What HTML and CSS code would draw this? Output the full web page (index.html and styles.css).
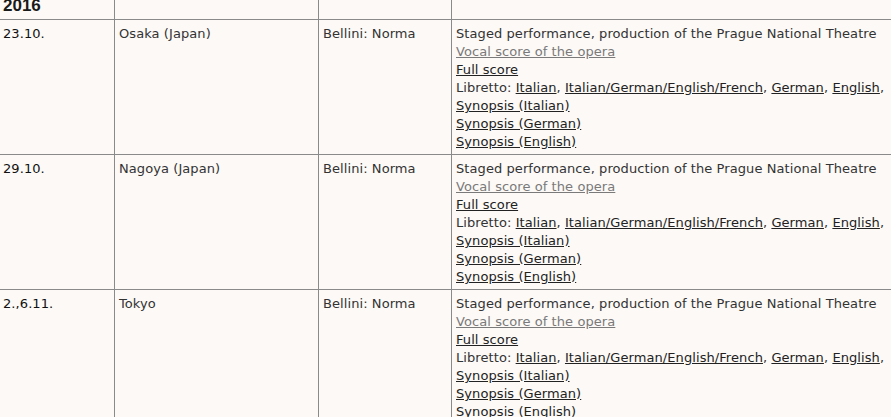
FILE: index.html
```html
<!DOCTYPE html>
<html lang="en">
<head>
<meta charset="utf-8">
<title>Performances 2016</title>
<link rel="stylesheet" href="styles.css">
</head>
<body>
<table class="schedule">
  <colgroup>
    <col class="c-date">
    <col class="c-place">
    <col class="c-work">
    <col class="c-info">
  </colgroup>
  <tr class="year-row">
    <th class="year">2016</th>
    <th></th>
    <th></th>
    <th></th>
  </tr>
  <tr>
    <td class="date">23.10.</td>
    <td>Osaka (Japan)</td>
    <td>Bellini: Norma</td>
    <td class="info">Staged performance, production of the Prague National Theatre<br>
      <a href="#" class="visited">Vocal score of the opera</a><br>
      <a href="#">Full score</a><br>
      Libretto: <a href="#">Italian</a>, <a href="#">Italian/German/English/French</a>, <a href="#">German</a>, <a href="#">English</a>,<br>
      <a href="#">Synopsis (Italian)</a><br>
      <a href="#">Synopsis (German)</a><br>
      <a href="#">Synopsis (English)</a></td>
  </tr>
  <tr>
    <td class="date">29.10.</td>
    <td>Nagoya (Japan)</td>
    <td>Bellini: Norma</td>
    <td class="info">Staged performance, production of the Prague National Theatre<br>
      <a href="#" class="visited">Vocal score of the opera</a><br>
      <a href="#">Full score</a><br>
      Libretto: <a href="#">Italian</a>, <a href="#">Italian/German/English/French</a>, <a href="#">German</a>, <a href="#">English</a>,<br>
      <a href="#">Synopsis (Italian)</a><br>
      <a href="#">Synopsis (German)</a><br>
      <a href="#">Synopsis (English)</a></td>
  </tr>
  <tr>
    <td class="date">2.,6.11.</td>
    <td>Tokyo</td>
    <td>Bellini: Norma</td>
    <td class="info">Staged performance, production of the Prague National Theatre<br>
      <a href="#" class="visited">Vocal score of the opera</a><br>
      <a href="#">Full score</a><br>
      Libretto: <a href="#">Italian</a>, <a href="#">Italian/German/English/French</a>, <a href="#">German</a>, <a href="#">English</a>,<br>
      <a href="#">Synopsis (Italian)</a><br>
      <a href="#">Synopsis (German)</a><br>
      <a href="#">Synopsis (English)</a></td>
  </tr>
</table>
</body>
</html>
```
FILE: styles.css
```css
html {
  overflow: hidden;
  background: #fcf9f6;
}
body {
  margin: 0;
  background: #fcf9f6;
  font-family: "DejaVu Sans", Verdana, sans-serif;
  font-size: 13px;
  letter-spacing: 0.08px;
  color: #333;
}
.schedule {
  border-collapse: separate;
  border-spacing: 0;
  table-layout: fixed;
  width: 1052px;
}
.c-date { width: 115px; }
.c-place { width: 204px; }
.c-work { width: 133px; }
.c-info { width: 600px; }

.schedule th,
.schedule td {
  border-right: 1px solid #8a8a8a;
  border-bottom: 1px solid #8a8a8a;
  text-align: left;
  vertical-align: top;
  white-space: nowrap;
  overflow: hidden;
}
.schedule th:last-child,
.schedule td:last-child {
  border-right: none;
}
.year-row th {
  padding: 0 3px 7px;
  height: 12px;
  line-height: 12px;
}
.year {
  font-family: "Liberation Sans", Arial, sans-serif;
  font-weight: bold;
  font-size: 17px;
  letter-spacing: 0;
  color: #1a1a1a;
}
.schedule td {
  padding: 5px 4px 3px;
  line-height: 18px;
}
.schedule td.date {
  padding-left: 3px;
  color: #111;
}
.info a {
  color: #222;
  text-decoration: underline;
}
.info a.visited {
  color: #7a7a7a;
}
```
